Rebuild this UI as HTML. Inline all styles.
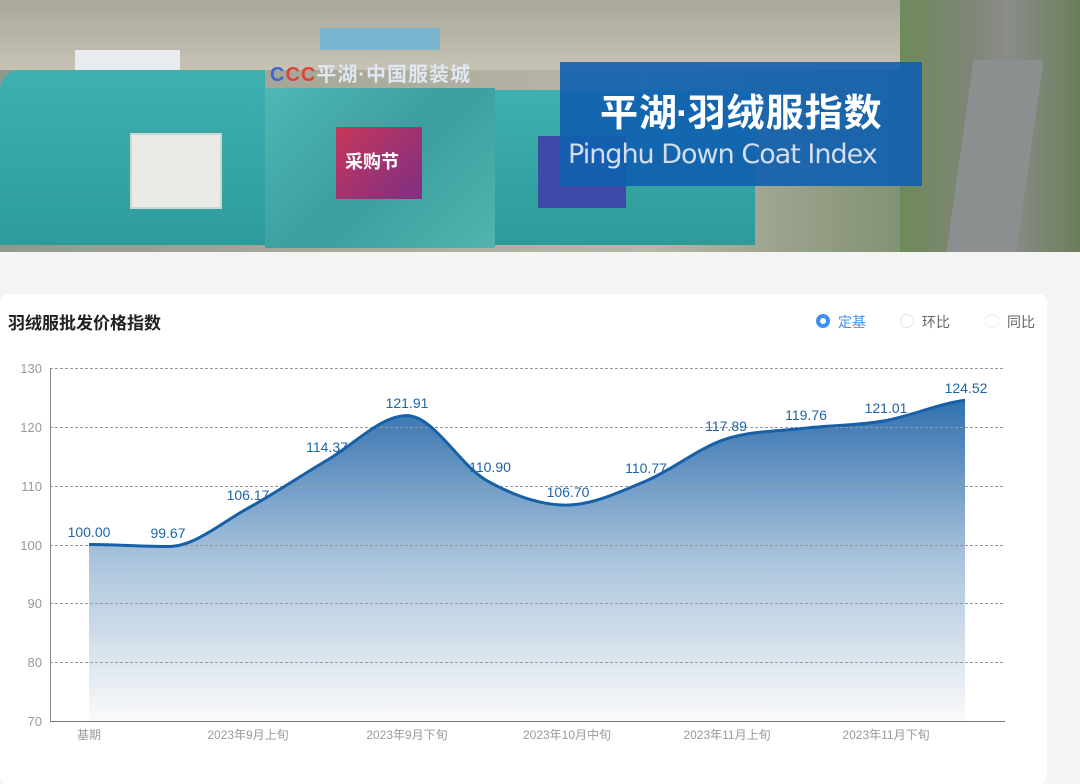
<!DOCTYPE html>
<html><head><meta charset="utf-8"><style>
*{margin:0;padding:0;box-sizing:border-box}
body{width:1080px;height:774px;overflow:hidden;background:#f4f4f4;font-family:"Liberation Sans","Noto Sans CJK SC",sans-serif;position:relative}
.banner{position:absolute;left:0;top:0;width:1080px;height:252px;overflow:hidden;background:linear-gradient(90deg,#8f9a8c 0%,#a9a99a 30%,#b8b6a8 60%,#7e8f70 85%,#6d7d6a 100%)}
.abs{position:absolute}
</style></head><body>
<div class="banner">
 <div class="abs" style="left:0;top:0;width:1080px;height:70px;background:linear-gradient(180deg,#a9a89c,#c7c2b4)"></div>
 <div class="abs" style="left:900px;top:0;width:180px;height:252px;background:linear-gradient(90deg,#6e8a5a,#7f8577 40%,#8b8d88 60%,#6a7e5c)"></div>
 <div class="abs" style="left:960px;top:60px;width:70px;height:192px;background:#8c8f90;transform:skewX(-8deg)"></div>
 <div class="abs" style="left:75px;top:50px;width:105px;height:45px;background:#e8ecef"></div>
 <div class="abs" style="left:320px;top:28px;width:120px;height:22px;background:#7ab5cf"></div>
 <div class="abs" style="left:0;top:70px;width:265px;height:175px;background:linear-gradient(180deg,#3fb0b0,#2d9b9c);border-top-left-radius:20px"></div>
 <div class="abs" style="left:265px;top:88px;width:230px;height:160px;background:linear-gradient(135deg,#4fb8b4,#3b9e9f 50%,#52b4ad)"></div>
 <div class="abs" style="left:495px;top:90px;width:260px;height:155px;background:linear-gradient(180deg,#3fb0ae,#2e9a9a)"></div>
 <div class="abs" style="left:130px;top:133px;width:92px;height:76px;background:#e9ece6;border:2px solid #cfd6d0"></div>
 <div class="abs" style="left:336px;top:127px;width:86px;height:72px;background:linear-gradient(135deg,#c5375a,#7e2f84)"></div>
 <div class="abs" style="left:345px;top:148px;color:#fff;font-size:18px;font-weight:bold">采购节</div>
 <div class="abs" style="left:538px;top:136px;width:88px;height:72px;background:#3e4aa8"></div>
 <div class="abs" style="left:270px;top:58px;color:#dfe8f0;font-size:20px;font-weight:bold;letter-spacing:1px"><span style="color:#3a6ad0">C</span><span style="color:#d4463e">C</span><span style="color:#d43">C</span>平湖·中国服装城</div>
 <div class="abs" style="left:560px;top:62px;width:362px;height:124px;background:rgba(15,95,175,0.9)"></div>
 <div class="abs" style="left:600px;top:86px;color:#fff;font-size:38px;font-weight:bold;letter-spacing:1px;font-family:'Noto Sans CJK SC',sans-serif;line-height:48px;white-space:nowrap">平湖<span style="font-family:'Liberation Sans';margin:0 -2px">·</span>羽绒服指数</div>
 <div class="abs" style="left:568px;top:138px;color:#d4def0;font-size:27px;line-height:34px;font-family:'DejaVu Sans',sans-serif;letter-spacing:-1px;white-space:nowrap">Pinghu Down Coat Index</div>
</div>
<div class="abs" style="left:0;top:294px;width:1047px;height:490px;background:#fff;border-radius:8px"></div>
<div class="abs" style="left:8px;top:309px;font-size:17px;font-weight:bold;color:#222">羽绒服批发价格指数</div>
<div class="abs" style="left:816px;top:314px;width:14px;height:14px;border-radius:50%;background:#3d8ff0;"><div style="margin:4px;width:6px;height:6px;border-radius:50%;background:#fff"></div></div>
<div class="abs" style="left:838px;top:312px;font-size:14px;color:#3d8ff0">定基</div>
<div class="abs" style="left:900px;top:314px;width:14px;height:14px;border-radius:50%;border:1px solid #e4e4e4"></div>
<div class="abs" style="left:922px;top:312px;font-size:14px;color:#666">环比</div>
<div class="abs" style="left:985px;top:314px;width:14px;height:14px;border-radius:50%;border:1px solid #eee"></div>
<div class="abs" style="left:1007px;top:312px;font-size:14px;color:#666">同比</div>
<svg class="abs" style="left:0;top:0" width="1080" height="774">
<defs><linearGradient id="g" gradientUnits="userSpaceOnUse" x1="0" y1="395" x2="0" y2="721"><stop offset="0" stop-color="#2d6dad"/><stop offset="0.5" stop-color="#a9c3dc"/><stop offset="1" stop-color="#fafafa"/></linearGradient></defs>
<path d="M89,544.5 C115.5,544.5 142,546.5 168.5,546.5 C195,546.5 221.5,522.6 248,508.2 C274.5,493.8 301,475.4 327.5,460 C354,444.6 380.5,415.6 407,415.6 C433.5,415.6 460,465.5 486.5,480.4 C513,495.3 539.5,505.1 566,505.1 C592.5,505.1 619,492.2 645.5,481.2 C672,470.2 698.5,448.1 725,439.3 C751.5,430.5 778,431.4 804.5,428.3 C831,425.2 857.5,425.6 884,420.9 C910.5,416.2 938.5,403.7 965,400.3 L965,721 L89,721 Z" fill="url(#g)"/>
<g stroke="#999" stroke-dasharray="3,2" stroke-width="1">
<line x1="50" y1="368.5" x2="1005" y2="368.5"/><line x1="50" y1="427.5" x2="1005" y2="427.5"/><line x1="50" y1="486.5" x2="1005" y2="486.5"/><line x1="50" y1="545.5" x2="1005" y2="545.5"/><line x1="50" y1="603.5" x2="1005" y2="603.5"/><line x1="50" y1="662.5" x2="1005" y2="662.5"/>
</g>
<path d="M89,544.5 C115.5,544.5 142,546.5 168.5,546.5 C195,546.5 221.5,522.6 248,508.2 C274.5,493.8 301,475.4 327.5,460 C354,444.6 380.5,415.6 407,415.6 C433.5,415.6 460,465.5 486.5,480.4 C513,495.3 539.5,505.1 566,505.1 C592.5,505.1 619,492.2 645.5,481.2 C672,470.2 698.5,448.1 725,439.3 C751.5,430.5 778,431.4 804.5,428.3 C831,425.2 857.5,425.6 884,420.9 C910.5,416.2 938.5,403.7 965,400.3" fill="none" stroke="#1560a8" stroke-width="3"/>
<line x1="50.5" y1="368" x2="50.5" y2="721" stroke="#888" stroke-width="1"/>
<line x1="50" y1="721.5" x2="1005" y2="721.5" stroke="#777" stroke-width="1"/>
<g font-family="Liberation Sans,sans-serif" font-size="13" fill="#999" text-anchor="end">
<text x="42" y="373">130</text><text x="42" y="432">120</text><text x="42" y="491">110</text><text x="42" y="550">100</text><text x="42" y="608">90</text><text x="42" y="667">80</text><text x="42" y="726">70</text>
</g>
<g font-family="Liberation Sans,'Noto Sans CJK SC',sans-serif" font-size="12" fill="#999" text-anchor="middle">
<text x="89" y="739">基期</text><text x="248" y="739">2023年9月上旬</text><text x="407" y="739">2023年9月下旬</text><text x="567" y="739">2023年10月中旬</text><text x="727" y="739">2023年11月上旬</text><text x="886" y="739">2023年11月下旬</text>
</g>
<g font-family="Liberation Sans,sans-serif" font-size="14" fill="#1e64a8" text-anchor="middle">
<text x="89" y="537">100.00</text><text x="168" y="538">99.67</text><text x="248" y="500">106.17</text><text x="327" y="452">114.37</text><text x="407" y="408">121.91</text><text x="490" y="472">110.90</text><text x="568" y="497">106.70</text><text x="646" y="473">110.77</text><text x="726" y="431">117.89</text><text x="806" y="420">119.76</text><text x="886" y="413">121.01</text><text x="966" y="393">124.52</text>
</g>
</svg>
</body></html>
